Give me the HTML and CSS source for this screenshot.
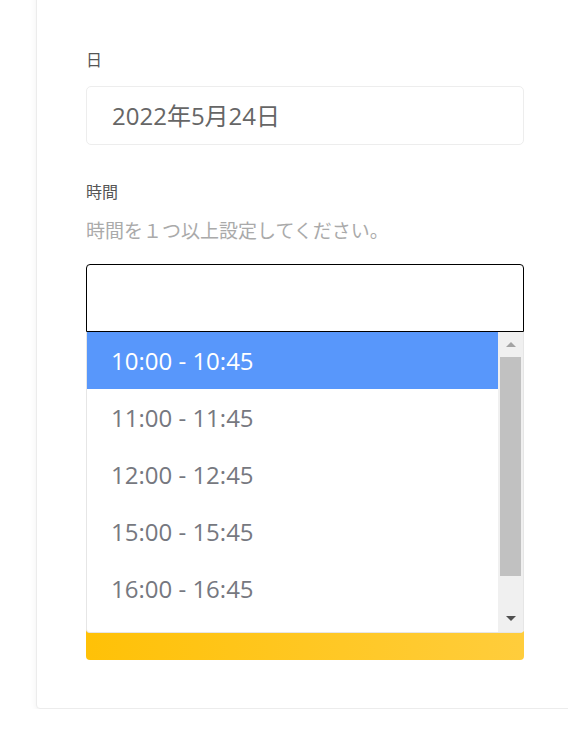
FILE: index.html
```html
<!DOCTYPE html>
<html lang="ja">
<head>
  <meta charset="UTF-8">
  <title>予約</title>
  <link rel="stylesheet" href="styles.css">
</head>
<body>

<div class="card">
  <label class="field-label">日</label>
  <div class="date-box">2022年5月24日</div>

  <label class="field-label time-label">時間</label>
  <p class="help">時間を１つ以上設定してください。</p>

  <div class="select-wrap">
    <div class="select-box"></div>

    <div class="dropdown">
      <ul class="options">
        <li class="selected">10:00 - 10:45</li>
        <li>11:00 - 11:45</li>
        <li>12:00 - 12:45</li>
        <li>15:00 - 15:45</li>
        <li>16:00 - 16:45</li>
      </ul>
      <div class="scrollbar">
        <span class="arrow up"></span>
        <span class="thumb"></span>
        <span class="arrow down"></span>
      </div>
    </div>
  </div>

  <button class="submit" type="button"></button>
</div>

</body>
</html>
```

FILE: styles.css
```css
body {
  margin: 0;
  background: #fff;
  font-family: "Open Sans", "Noto Sans CJK JP", sans-serif;
  overflow: hidden;
}

.card {
  width: 600px;
  margin: -20px 0 0 36px;
  padding: 67px 0 48px 49px;
  background: #fff;
  border: 1px solid #ececec;
  border-radius: 4px;
  box-shadow: 0 2px 6px rgba(0,0,0,0.06);
}

.field-label {
  display: block;
  font-size: 16px;
  line-height: 24px;
  color: #555;
}

.date-box {
  box-sizing: border-box;
  width: 438px;
  height: 59px;
  margin-top: 14px;
  padding-left: 25px;
  border: 1px solid #ededed;
  border-radius: 5px;
  font-size: 24px;
  line-height: 57px;
  color: #666;
}

.time-label {
  margin-top: 35px;
}

.help {
  margin: 14px 0 0;
  font-size: 19px;
  line-height: 26px;
  color: #aaa;
}

.select-wrap {
  position: relative;
  width: 438px;
  margin-top: 20px;
}

.select-box {
  height: 68px;
  box-sizing: border-box;
  border: 1px solid #000;
  border-radius: 4px 4px 0 0;
  background: #fff;
}

.dropdown {
  position: absolute;
  top: 68px;
  left: 0;
  right: 0;
  height: 300px;
  display: flex;
  background: #fff;
  border-left: 1px solid #e6e6e6;
  border-bottom: 1px solid #e6e6e6;
  border-radius: 0 0 4px 4px;
  overflow: hidden;
  z-index: 2;
}

.options {
  flex: 1;
  margin: 0;
  padding: 0;
  list-style: none;
}

.options li {
  height: 57px;
  padding-left: 24px;
  font-size: 24px;
  line-height: 57px;
  color: #767880;
}

.options li.selected {
  background: #5897fb;
  color: #fff;
}

.scrollbar {
  width: 25px;
  display: flex;
  flex-direction: column;
  align-items: center;
  background: #f0f0f0;
  border-right: 1px solid #e6e6e6;
}

.thumb {
  width: 21px;
  height: 219px;
  background: #c1c1c1;
}

.arrow {
  width: 0;
  height: 0;
  border-left: 5px solid transparent;
  border-right: 5px solid transparent;
}

.arrow.up {
  margin: 10px 0 10px;
  border-bottom: 5px solid #a3a3a3;
}

.arrow.down {
  margin-top: 40px;
  border-top: 5px solid #505050;
}

.submit {
  display: block;
  width: 438px;
  height: 56px;
  margin-top: 272px;
  border: none;
  border-radius: 4px;
  background: linear-gradient(90deg, #ffc107, #ffcd3c);
}
```
